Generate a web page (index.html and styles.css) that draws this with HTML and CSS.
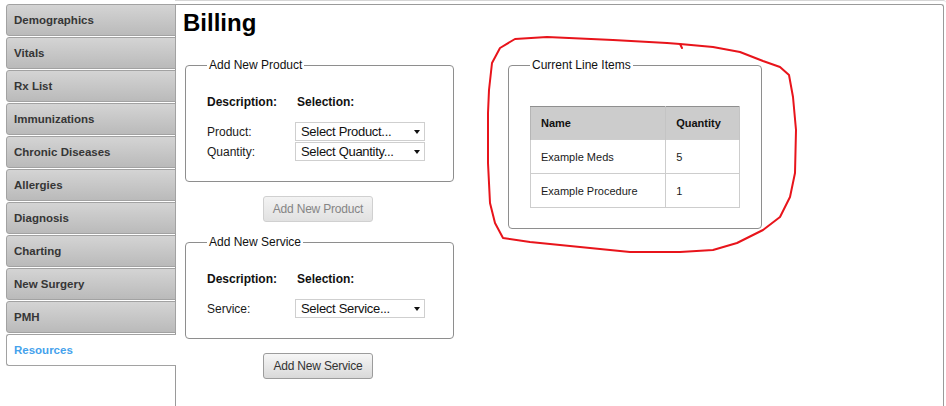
FILE: index.html
```html
<!DOCTYPE html>
<html lang="en">
<head>
<meta charset="utf-8">
<title>Billing</title>
<link rel="stylesheet" href="styles.css">
</head>
<body>
<div class="app">
  <nav class="tabs">
    <a class="tab">Demographics</a>
    <a class="tab">Vitals</a>
    <a class="tab">Rx List</a>
    <a class="tab">Immunizations</a>
    <a class="tab">Chronic Diseases</a>
    <a class="tab">Allergies</a>
    <a class="tab">Diagnosis</a>
    <a class="tab">Charting</a>
    <a class="tab">New Surgery</a>
    <a class="tab">PMH</a>
    <a class="tab active">Resources</a>
  </nav>
  <div class="frame">
    <main class="panel">
      <h1 class="title">Billing</h1>
      <div class="cols">
        <div class="left">
          <fieldset class="box form">
            <legend>Add New Product</legend>
            <div class="grid">
              <span class="th">Description:</span><span class="th th-sel">Selection:</span>
              <span class="lbl">Product:</span><div class="select">Select Product...<i class="caret"></i></div>
              <span class="lbl">Quantity:</span><div class="select">Select Quantity...<i class="caret"></i></div>
            </div>
          </fieldset>
          <button class="btn btn-disabled" type="button">Add New Product</button>
          <fieldset class="box form form-2">
            <legend>Add New Service</legend>
            <div class="grid">
              <span class="th">Description:</span><span class="th th-sel">Selection:</span>
              <span class="lbl">Service:</span><div class="select">Select Service...<i class="caret"></i></div>
            </div>
          </fieldset>
          <button class="btn" type="button">Add New Service</button>
        </div>
        <fieldset class="box items">
          <legend>Current Line Items</legend>
          <table class="lines">
            <thead>
              <tr><th class="c-name">Name</th><th class="c-qty">Quantity</th></tr>
            </thead>
            <tbody>
              <tr><td>Example Meds</td><td>5</td></tr>
              <tr><td>Example Procedure</td><td>1</td></tr>
            </tbody>
          </table>
        </fieldset>
      </div>
    </main>
  </div>
  <svg class="scribble" width="946" height="406" viewBox="0 0 946 406" aria-hidden="true">
    <path d="M 682 48 L 680 44 L 667 43 L 613 40 L 547 37 L 515 39 L 500 48 L 492 63 L 489 90 L 488 113 L 488 163 L 490 203 L 495 223 L 503 238 L 530 242 L 580 247 L 630 252 L 680 252 L 713 250 L 737 243 L 763 230 L 780 217 L 790 197 L 795 173 L 796 130 L 793 97 L 789 75 L 780 67 L 763 61 L 740 52 L 713 47 L 680 44" fill="none" stroke="#e8141b" stroke-width="2" stroke-linejoin="round" stroke-linecap="round"/>
  </svg>
</div>
</body>
</html>
```

FILE: styles.css
```css
* { box-sizing: border-box; }

html, body {
  margin: 0;
  padding: 0;
  background: #fff;
}

body {
  font-family: "Liberation Sans", Arial, sans-serif;
  color: #111;
}

.app {
  position: relative;
  display: flex;
  min-height: 100vh;
}

/* sidebar tabs */
.tabs {
  position: relative;
  z-index: 1;
  width: 176px;
  flex: none;
  margin-right: -1px;
  padding: 4px 0 0 6px;
  display: flex;
  flex-direction: column;
  gap: 1px;
}

.tab {
  display: block;
  height: 32px;
  line-height: 30px;
  padding-left: 7px;
  border: 1px solid #a2a2a2;
  border-radius: 3px 0 0 3px;
  background: linear-gradient(#d4d4d4, #bababa);
  font-size: 11.5px;
  font-weight: bold;
  color: #363636;
  white-space: nowrap;
}

.tab.active {
  background: #fff;
  border-right: none;
  color: #45a2ec;
}

/* main panel */
.frame {
  flex: 1;
  display: flex;
  flex-direction: column;
  border-top: 1px solid #d6d6d6;
  border-top-right-radius: 3px;
  padding: 3px 2px 0 0;
}

.panel {
  flex: 1;
  border: 1px solid #9a9a9a;
  border-bottom: none;
  border-top-right-radius: 3px;
  padding: 0 0 0 9px;
}

.title {
  margin: 4px 0 0 -2px;
  font-size: 24px;
  line-height: 28px;
  font-weight: bold;
  color: #000;
}

.cols {
  display: flex;
  align-items: flex-start;
  gap: 54px;
  margin-top: 21px;
}

.left {
  width: 269px;
  display: flex;
  flex-direction: column;
  align-items: flex-start;
}

/* fieldsets */
.box {
  margin: 0;
  border: 1px solid #8e8e8e;
  border-radius: 4px;
  min-width: 0;
}

.box legend {
  padding: 0 2px;
  font-size: 12px;
  line-height: 14px;
  color: #111;
}

.form {
  width: 269px;
  padding: 23px 20px 20px 21px;
}

.form-2 {
  margin-top: 13px;
}

.grid {
  display: grid;
  grid-template-columns: 88px 130px;
  row-gap: 1px;
}

.th {
  font-size: 12px;
  line-height: 14px;
  font-weight: bold;
  color: #111;
  margin-bottom: 12px;
}

.th-sel {
  padding-left: 2px;
}

.lbl {
  align-self: center;
  font-size: 12px;
  line-height: 14px;
  color: #1a1a1a;
}

.select {
  position: relative;
  height: 19px;
  border: 1px solid #cfcfcf;
  background: #fff;
  padding-left: 5px;
  font-size: 13px;
  line-height: 17px;
  letter-spacing: -0.3px;
  color: #111;
  white-space: nowrap;
}

.caret {
  position: absolute;
  right: 4px;
  top: 7px;
  width: 0;
  height: 0;
  border-left: 3.5px solid transparent;
  border-right: 3.5px solid transparent;
  border-top: 4px solid #111;
}

/* buttons */
.btn {
  margin: 14px 0 0 78px;
  width: 110px;
  height: 26px;
  padding: 0;
  border: 1px solid #9c9c9c;
  border-radius: 3px;
  background: linear-gradient(#f6f6f6, #d9d9d9);
  font-family: "Liberation Sans", Arial, sans-serif;
  font-size: 12px;
  letter-spacing: -0.2px;
  color: #333;
}

.btn-disabled {
  border-color: #d0d0d0;
  background: linear-gradient(#f3f3f3, #e1e1e1);
  color: #858585;
}

/* line items */
.items {
  width: 254px;
  padding: 34px 21px 20px 21px;
}

.lines {
  width: 210px;
  border-collapse: collapse;
  font-size: 11px;
  color: #1a1a1a;
}

.lines th {
  height: 33px;
  background: #cccccc;
  border-top: 1px solid #8f8f8f;
  border-left: 1px solid #b5b5b5;
  border-right: 1px solid #c4c4c4;
  text-align: left;
  font-weight: bold;
  padding: 0 0 0 10px;
  color: #111;
}

.lines .c-name { width: 136px; }
.lines .c-qty { width: 74px; }

.lines td {
  height: 34px;
  border: 1px solid #cdcdcd;
  padding: 0 0 0 10px;
}

/* annotation */
.scribble {
  position: absolute;
  left: 0;
  top: 0;
  pointer-events: none;
  z-index: 2;
}
```
